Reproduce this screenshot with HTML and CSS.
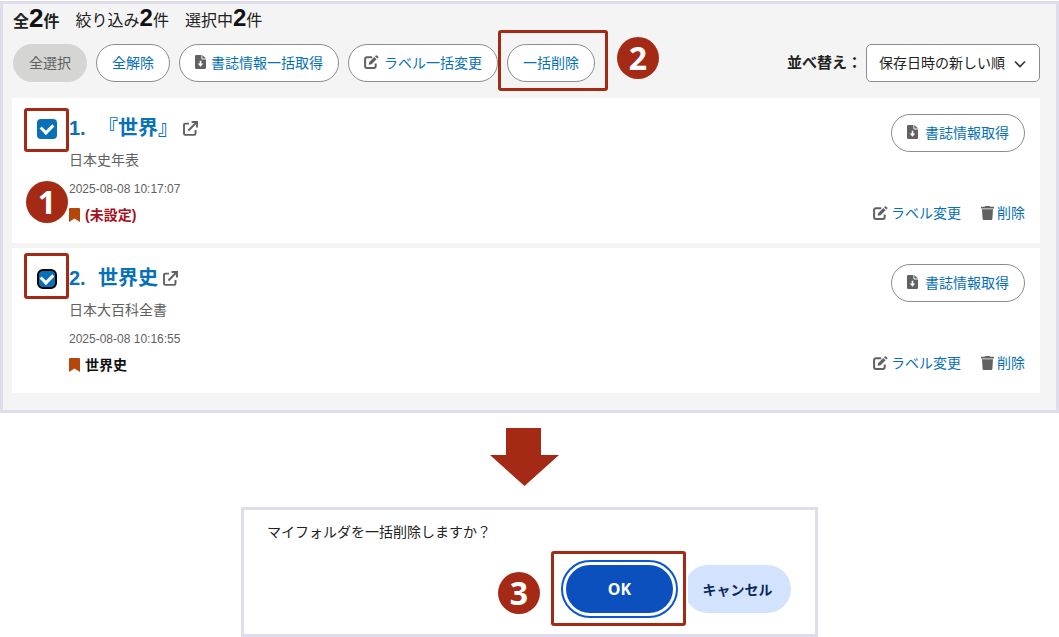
FILE: index.html
```html
<!DOCTYPE html>
<html lang="ja">
<head>
  <meta charset="UTF-8">
  <title>マイフォルダ</title>
  <link rel="stylesheet" href="styles.css">
</head>
<body>
  <!-- アイコン定義 -->
  <svg class="defs" aria-hidden="true">
    <symbol id="i-file" viewBox="0 0 11 14">
      <path fill-rule="evenodd" d="M1.3 0H6.4V3.6Q6.4 4.4 7.2 4.4H11V12.8Q11 14 9.8 14H1.3Q0 14 0 12.8V1.2Q0 0 1.3 0ZM4.7 5.8V8.6H2.7L5.5 11.8L8.3 8.6H6.3V5.8Z"/>
      <path d="M7.3 0L11 3.5H7.3Z"/>
    </symbol>
    <symbol id="i-edit" viewBox="0 0 15 14">
      <path d="M8.2 2.2H3Q1.1 2.2 1.1 4V11Q1.1 12.9 3 12.9H9.8Q11.7 12.9 11.7 11V8.4" fill="none" stroke="currentColor" stroke-width="2"/>
      <path d="M4.6 9.8L5.3 6.9L10.3 1.9L12.6 4.2L7.6 9.2ZM11 1.2L11.8 .4Q12.4 -.1 13 .4L14.2 1.6Q14.7 2.2 14.2 2.8L13.3 3.6Z"/>
    </symbol>
    <symbol id="i-trash" viewBox="0 0 13 14">
      <path d="M0 .8H3.8L4.4 0H8.6L9.2 .8H13V2.4H0ZM1 3.3H12L11.4 12.8Q11.3 14 10.1 14H2.9Q1.7 14 1.6 12.8Z"/>
    </symbol>
    <symbol id="i-open" viewBox="0 0 15 15">
      <path d="M6 2.6H2.2Q1 2.6 1 3.8V12.6Q1 13.9 2.2 13.9H11.2Q12.5 13.9 12.5 12.6V9M5.4 9.5L13.4 1.5M8.6 1H14V6.4" fill="none" stroke="currentColor" stroke-width="1.9"/>
    </symbol>
    <symbol id="i-mark" viewBox="0 0 11 14">
      <path d="M1 0H10Q11 0 11 1V14L5.5 10.4L0 14V1Q0 0 1 0Z"/>
    </symbol>
  </svg>

  <main class="panel">
    <p class="counts">
      <span class="count total">全<b>2</b>件</span>
      <span class="count">絞り込み<b>2</b>件</span>
      <span class="count">選択中<b>2</b>件</span>
    </p>

    <div class="toolbar">
      <button class="btn" disabled>全選択</button>
      <button class="btn">全解除</button>
      <button class="btn"><svg class="icon file"><use href="#i-file"/></svg>書誌情報一括取得</button>
      <button class="btn"><svg class="icon edit"><use href="#i-edit"/></svg>ラベル一括変更</button>
      <span class="step step-delete">
        <button class="btn">一括削除</button>
        <span class="frame"></span>
        <span class="badge">2</span>
      </span>
      <div class="sort">
        <label for="sort">並べ替え：</label>
        <div class="select">
          <select id="sort"><option>保存日時の新しい順</option></select>
          <svg class="chevron" viewBox="0 0 12 8"><path d="M1 1.500L6 6.500L11 1.500"/></svg>
        </div>
      </div>
    </div>

    <article class="item">
      <span class="step step-check">
        <input type="checkbox" id="item1" checked aria-label="1. 『世界』">
        <span class="frame"></span>
        <span class="badge">1</span>
      </span>
      <div class="body">
        <h2><a href="#"><span class="no">1.</span>『世界』<svg class="icon open"><use href="#i-open"/></svg></a></h2>
        <p class="source">日本史年表</p>
        <p class="date">2025-08-08 10:17:07</p>
        <p class="tag unset"><svg class="icon mark"><use href="#i-mark"/></svg>(未設定)</p>
      </div>
      <div class="actions">
        <button class="btn"><svg class="icon file"><use href="#i-file"/></svg>書誌情報取得</button>
        <div class="links">
          <a href="#"><svg class="icon edit"><use href="#i-edit"/></svg>ラベル変更</a>
          <a href="#"><svg class="icon trash"><use href="#i-trash"/></svg>削除</a>
        </div>
      </div>
    </article>

    <article class="item">
      <span class="step step-check">
        <input type="checkbox" id="item2" class="focused" checked aria-label="2. 世界史">
        <span class="frame tall"></span>
      </span>
      <div class="body">
        <h2><a href="#"><span class="no">2.</span>世界史<svg class="icon open"><use href="#i-open"/></svg></a></h2>
        <p class="source">日本大百科全書</p>
        <p class="date">2025-08-08 10:16:55</p>
        <p class="tag"><svg class="icon mark"><use href="#i-mark"/></svg>世界史</p>
      </div>
      <div class="actions">
        <button class="btn"><svg class="icon file"><use href="#i-file"/></svg>書誌情報取得</button>
        <div class="links">
          <a href="#"><svg class="icon edit"><use href="#i-edit"/></svg>ラベル変更</a>
          <a href="#"><svg class="icon trash"><use href="#i-trash"/></svg>削除</a>
        </div>
      </div>
    </article>
  </main>

  <svg class="arrow" viewBox="0 0 69 58" aria-hidden="true"><path d="M16 0H51V27H69L34.500 58L0 27H16Z"/></svg>

  <!-- 確認ダイアログ -->
  <section class="dialog" role="dialog" aria-labelledby="message">
    <p id="message">マイフォルダを一括削除しますか？</p>
    <div class="answers">
      <span class="step step-ok">
        <button class="answer ok">OK</button>
        <span class="frame"></span>
        <span class="badge">3</span>
      </span>
      <button class="answer">キャンセル</button>
    </div>
  </section>
</body>
</html>
```

FILE: styles.css
```css
* {
  box-sizing: border-box;
}

body {
  margin: 0;
  padding-top: 1px;
  display: flex;
  flex-direction: column;
  background: #fff;
  color: #222;
  font-family: "Liberation Sans", "Noto Sans CJK JP", sans-serif;
  font-size: 14px;
}

p, h2 {
  margin: 0;
}

a {
  color: #0770b8;
  text-decoration: none;
}

button, select {
  font: inherit;
  cursor: pointer;
}

.defs {
  position: absolute;
  width: 0;
  height: 0;
}

.icon {
  flex: none;
  color: #616161;
  fill: currentColor;
}

.file { width: 11px; height: 14px; }
.edit { width: 15px; height: 14px; }
.trash { width: 13px; height: 14px; }
.open { width: 15px; height: 15px; }
.mark { width: 11px; height: 14px; color: #b54708; }

.panel {
  padding: 0 16px 17px 9px;
  border: 3px solid #dfdcec;
  background: #f4f4f4;
}

.counts {
  display: flex;
  gap: 16px;
  height: 30px;
  padding-left: 1px;
  line-height: 28px;
  font-size: 16px;
  white-space: nowrap;
}

.count b {
  font-size: 24px;
  color: #111;
}

.total {
  font-weight: bold;
}

.total b {
  font-size: 26px;
}

.toolbar {
  display: flex;
  gap: 9px;
  margin: 10px 0 16px;
  padding-left: 1px;
}

.btn {
  display: flex;
  align-items: center;
  justify-content: center;
  gap: 5px;
  height: 38px;
  padding: 0 15px 2px;
  border: 1px solid #8c8c8c;
  border-radius: 19px;
  background: #fff;
  color: #0770b8;
  white-space: nowrap;
}

.btn:disabled {
  border-color: #d5d5d3;
  background: #d5d5d3;
  color: #626262;
}

.sort {
  display: flex;
  align-items: center;
  gap: 4px;
  margin-left: auto;
}

.sort label {
  padding-bottom: 4px;
  font-size: 15px;
  font-weight: bold;
}

.select {
  position: relative;
}

.select select {
  appearance: none;
  width: 174px;
  height: 38px;
  padding: 0 30px 0 12px;
  border: 1px solid #8c8c8c;
  border-radius: 5px;
  background: #fff;
  color: #222;
}

.chevron {
  position: absolute;
  top: 16px;
  right: 14px;
  width: 12px;
  height: 8px;
  fill: none;
  stroke: #333;
  stroke-width: 1.6;
  pointer-events: none;
}

.item {
  display: flex;
  align-items: flex-start;
  gap: 12px;
  padding: 16px 15px 18px 25px;
  background: #fff;
}

.item + .item {
  margin-top: 5px;
}

.step-check {
  margin-top: 5px;
}

.item input {
  appearance: none;
  display: grid;
  place-items: center;
  width: 20px;
  height: 20px;
  margin: 0;
  border-radius: 4px;
  background: #0770b8;
}

.item input::before {
  content: "";
  width: 9px;
  height: 6px;
  margin-bottom: 3px;
  border: solid #fff;
  border-width: 0 0 3px 3px;
  transform: rotate(-45deg);
}

.item .focused {
  border: 2px solid #000;
  border-radius: 6px;
}

.body {
  flex: 1;
}

.body h2 {
  font-size: 20px;
  line-height: 28px;
}

.body h2 a {
  display: flex;
  align-items: center;
}

.no {
  width: 29px;
}

.open {
  margin-left: 5px;
}

.source {
  margin-top: 6px;
  line-height: 24px;
  color: #616161;
}

.date {
  margin-top: 8px;
  font-size: 12px;
  line-height: 18px;
  color: #616161;
}

.tag {
  display: flex;
  align-items: center;
  gap: 5px;
  margin-top: 7px;
  line-height: 20px;
  font-weight: bold;
  color: #111;
}

.unset {
  color: #a5121d;
}

.actions {
  display: flex;
  flex-direction: column;
  align-items: flex-end;
  gap: 49px;
}

.actions .btn {
  gap: 7px;
}

.links {
  display: flex;
  gap: 20px;
  line-height: 24px;
}

.links a {
  display: flex;
  align-items: center;
  gap: 3px;
}

/* 手順の赤枠と番号 */
.step {
  position: relative;
}

.frame {
  position: absolute;
  border: 3px solid #a52a16;
  border-radius: 3px;
  pointer-events: none;
}

.badge {
  position: absolute;
  width: 42px;
  height: 42px;
  border-radius: 50%;
  background: #a52a16;
  color: #fff;
  font: bold 32px/42px "Noto Sans", sans-serif;
  text-align: center;
}

.step-check .frame { inset: -11px -12px -13px -13px; }
.step-check .tall { inset: -16px -12px -10px -13px; }
.step-check .badge { top: 62px; left: -11px; }
.step-delete .frame { inset: -14px -13px -9px -9px; }
.step-delete .badge { top: -7px; left: 110px; }
.step-ok .frame { inset: -14px -13px -13px -15px; box-shadow: 0 0 0 2px #fff; }
.step-ok .badge { top: 7px; left: -68px; }

.arrow {
  align-self: center;
  width: 69px;
  height: 58px;
  margin: 15px 10px 21px 0;
  fill: #a52a16;
}

.dialog {
  align-self: center;
  width: 577px;
  max-width: 100%;
  padding: 10px 24px 21px 23px;
  border: 3px solid #dfdcec;
  background: #fff;
}

.dialog p {
  line-height: 24px;
}

.answers {
  display: flex;
  justify-content: flex-end;
  gap: 11px;
  margin-top: 21px;
}

.answer {
  width: 107px;
  height: 48px;
  padding: 0;
  border: 0;
  border-radius: 24px;
  background: #d3e3fd;
  color: #0a2a5c;
  font-weight: bold;
}

.ok {
  background: #0b50bd;
  color: #fff;
  font-family: "Noto Sans", sans-serif;
  font-size: 16px;
  outline: 2px solid #0b57d0;
  outline-offset: 3px;
}
```
